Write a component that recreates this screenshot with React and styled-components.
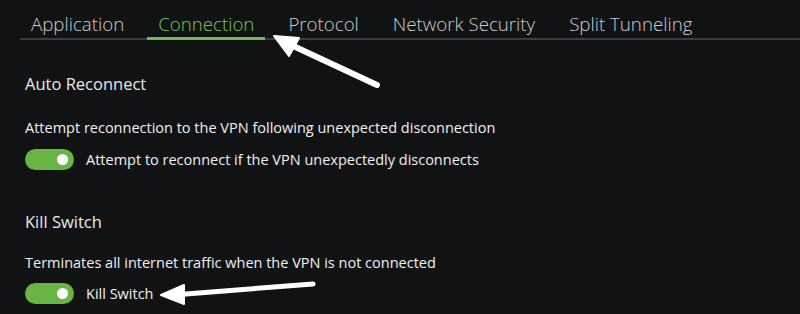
import React from "react";
import styled, { createGlobalStyle } from "styled-components";

const GlobalStyle = createGlobalStyle`
  html, body {
    margin: 0;
    background: #111214;
  }
  body {
    font-family: "Open Sans", "Noto Sans", sans-serif;
    color: #ececec;
  }
`;

const Page = styled.div`
  position: relative;
  width: 800px;
  height: 314px;
  overflow: hidden;
  padding-top: 11px;
  box-sizing: border-box;
`;

const TabBar = styled.nav`
  display: flex;
  gap: 12px;
  margin-left: 20px;
  border-bottom: 2px solid #3c3d3f;
`;

const Tab = styled.div`
  padding: 1px 11px 1px;
  margin-bottom: -2px;
  font-size: 18.7px;
  font-weight: 300;
  line-height: 24px;
  color: ${(p) => (p.$active ? "#7cc75a" : "#cdcdcd")};
  border-bottom: 3px solid ${(p) => (p.$active ? "#6fba4c" : "transparent")};
`;

const Section = styled.section`
  padding-left: 25px;
  margin-top: ${(p) => p.$top}px;
`;

const SectionTitle = styled.h2`
  margin: 0;
  font-size: 16.5px;
  font-weight: 400;
  line-height: 22px;
  color: #e8e8e8;
`;

const Description = styled.p`
  margin: ${(p) => p.$gap}px 0 0;
  font-size: 14.5px;
  line-height: 20px;
  color: #f0f0f0;
`;

const ToggleRow = styled.label`
  display: flex;
  align-items: center;
  gap: 12px;
  margin-top: ${(p) => p.$gap}px;
`;

const Toggle = styled.span`
  display: flex;
  align-items: center;
  justify-content: ${(p) => (p.$on ? "flex-end" : "flex-start")};
  box-sizing: border-box;
  width: 49px;
  height: 21px;
  padding: 0 6px;
  border-radius: 11px;
  background: ${(p) => (p.$on ? "#6ab446" : "#3a3a3a")};

  &::after {
    content: "";
    width: 11px;
    height: 11px;
    border-radius: 50%;
    background: #ffffff;
  }
`;

const ToggleLabel = styled.span`
  font-size: 14.5px;
  line-height: 20px;
  color: #f0f0f0;
`;

const Annotations = styled.svg`
  position: absolute;
  inset: 0;
  pointer-events: none;
`;

const tabs = ["Application", "Connection", "Protocol", "Network Security", "Split Tunneling"];

const Arrow = ({ tail, tip, left, right, width }) => (
  <g fill="#ffffff" stroke="#ffffff">
    <line x1={tail[0]} y1={tail[1]} x2={(tip[0] + left[0] + right[0]) / 3} y2={(tip[1] + left[1] + right[1]) / 3} strokeWidth={width} strokeLinecap="round" />
    <polygon points={`${tip.join(",")} ${left.join(",")} ${right.join(",")}`} strokeWidth="2" strokeLinejoin="round" />
  </g>
);

const App = () => (
  <Page>
    <GlobalStyle />
    <TabBar>
      {tabs.map((t) => (
        <Tab key={t} $active={t === "Connection"}>{t}</Tab>
      ))}
    </TabBar>

    <Section $top={33}>
      <SectionTitle>Auto Reconnect</SectionTitle>
      <Description $gap={23}>Attempt reconnection to the VPN following unexpected disconnection</Description>
      <ToggleRow $gap={11}>
        <Toggle $on />
        <ToggleLabel>Attempt to reconnect if the VPN unexpectedly disconnects</ToggleLabel>
      </ToggleRow>
    </Section>

    <Section $top={41}>
      <SectionTitle>Kill Switch</SectionTitle>
      <Description $gap={20}>Terminates all internet traffic when the VPN is not connected</Description>
      <ToggleRow $gap={10}>
        <Toggle $on />
        <ToggleLabel>Kill Switch</ToggleLabel>
      </ToggleRow>
    </Section>

    <Annotations width="800" height="314" viewBox="0 0 800 314">
      <Arrow tail={[377, 85]} tip={[274, 36]} left={[299, 38]} right={[289, 56]} width={6} />
      <Arrow tail={[313, 284]} tip={[161, 295]} left={[184, 285]} right={[184, 304]} width={5} />
    </Annotations>
  </Page>
);

export default App;
